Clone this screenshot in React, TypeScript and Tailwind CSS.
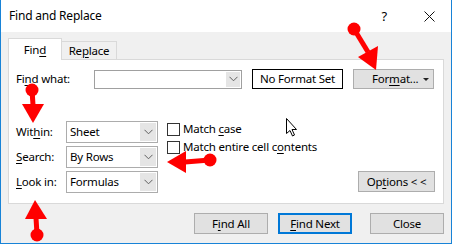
import React from "react";

const font = { fontFamily: '"Segoe UI", "Noto Sans", sans-serif' };

function Chevron() {
  return (
    <svg width="9" height="6" viewBox="0 0 9 6">
      <path d="M0.5 0.8 L4.5 4.8 L8.5 0.8" fill="none" stroke="#606060" strokeWidth="1" />
    </svg>
  );
}

function Select({ value }: { value: string }) {
  return (
    <div className="flex h-[22px] w-[92px] items-stretch border border-[#acacac] bg-white">
      <div className="flex flex-1 items-center pl-[3px] text-black">{value}</div>
      <div className="m-px flex w-[16px] items-center justify-center bg-[#e5e5e5]">
        <Chevron />
      </div>
    </div>
  );
}

function Btn({
  children,
  w = "w-[74px]",
  primary = false,
}: {
  children: React.ReactNode;
  w?: string;
  primary?: boolean;
}) {
  return (
    <div
      className={`${w} flex h-[21px] items-center justify-center bg-[#e1e1e1] text-black ${
        primary ? "border-2 border-[#0078d7]" : "border border-[#adadad]"
      }`}
    >
      {children}
    </div>
  );
}

function Check({ children }: { children: React.ReactNode }) {
  return (
    <div className="flex h-[18px] items-center">
      <div className="h-[13px] w-[13px] border border-[#333] bg-white" />
      <span className="ml-[3px]">{children}</span>
    </div>
  );
}

export default function App() {
  return (
    <div
      className="relative h-[244px] w-[452px] overflow-hidden border-x border-b border-[#1883d7] bg-[#f0f0f0] text-[11.5px] leading-none tracking-[-0.2px] text-black"
      style={font}
    >
      {/* title bar */}
      <div className="flex h-[32px] items-center bg-white pl-[8px] pr-[16px]">
        <span className="flex-1 text-[12px]">Find and Replace</span>
        <span className="mr-[37px] text-[13px]">?</span>
        <svg width="11" height="11" viewBox="0 0 11 11">
          <path d="M0.5 0.5 L10.5 10.5 M10.5 0.5 L0.5 10.5" stroke="#111" strokeWidth="1" />
        </svg>
      </div>

      <div className="px-[7px] pt-[6px]">
        {/* tabs */}
        <div className="relative z-10 -mb-px flex items-end">
          <div className="flex h-[22px] w-[54px] items-center justify-center border border-b-0 border-[#d9d9d9] bg-white">
            Fin<u className="underline-offset-2">d</u>
          </div>
          <div className="flex h-[19px] w-[55px] items-center justify-center border border-l-0 border-[#d9d9d9] bg-[#f0f0f0]">
            Re<u className="underline-offset-2">p</u>lace
          </div>
        </div>

        {/* panel */}
        <div className="h-[145px] border border-[#d9d9d9] bg-white pl-[7px] pr-[8px]">
          <div className="mt-[9px] flex items-center">
            <span className="w-[78px]">
              Fi<u className="underline-offset-2">n</u>d what:
            </span>
            <div className="flex h-[19px] w-[148px] items-stretch border border-[#a0a0a0] bg-white">
              <div className="flex-1" />
              <div className="m-px flex w-[14px] items-center justify-center bg-[#e5e5e5]">
                <Chevron />
              </div>
            </div>
            <div className="ml-[10px] flex h-[20px] w-[91px] items-center justify-center border border-black">
              No Format Set
            </div>
            <div className="ml-[10px] flex h-[20px] w-[81px] items-center border border-[#adadad] bg-[#e1e1e1]">
              <span className="pl-[18px]">
                For<u className="underline-offset-2">m</u>at...
              </span>
              <div className="flex-1" />
              <svg className="mr-[4px]" width="6" height="3" viewBox="0 0 6 3">
                <path d="M0 0 H6 L3 3 Z" fill="#222" />
              </svg>
            </div>
          </div>

          <div className="mt-[32px] flex items-start">
            <div className="flex flex-col gap-[3px]">
              <div className="flex items-center">
                <span className="w-[50px]">
                  Wit<u className="underline-offset-2">h</u>in:
                </span>
                <Select value="Sheet" />
              </div>
              <div className="flex items-center">
                <span className="w-[50px]">
                  <u className="underline-offset-2">S</u>earch:
                </span>
                <Select value="By Rows" />
              </div>
              <div className="flex items-center">
                <span className="w-[50px]">
                  <u className="underline-offset-2">L</u>ook in:
                </span>
                <Select value="Formulas" />
              </div>
            </div>
            <div className="ml-[9px] mt-[-1px] flex flex-col">
              <Check>
                Match <u className="underline-offset-2">c</u>ase
              </Check>
              <Check>
                Match entire cell c<u className="underline-offset-2">o</u>ntents
              </Check>
            </div>
            <div className="flex-1" />
            <div className="mt-[50px]">
              <div className="flex h-[21px] w-[77px] items-center justify-center border border-[#adadad] bg-[#e1e1e1]">
                Op<u className="underline-offset-2">t</u>ions &lt; &lt;
              </div>
            </div>
          </div>
        </div>

        {/* bottom buttons */}
        <div className="mt-[9px] flex justify-end">
          <Btn>
            F<u className="underline-offset-2">i</u>nd All
          </Btn>
          <div className="ml-[10px]">
            <Btn primary>
              <u className="underline-offset-2">F</u>ind Next
            </Btn>
          </div>
          <div className="ml-[18px]">
            <Btn>Close</Btn>
          </div>
        </div>
      </div>

      {/* annotations */}
      <svg className="pointer-events-none absolute left-[-1px] top-0" width="452" height="244" viewBox="0 0 452 244">
        <g fill="#ff0000" stroke="#ff0000">
          <line x1="354" y1="29" x2="368" y2="52" strokeWidth="5" />
          <circle cx="354" cy="29" r="6.5" stroke="none" />
          <polygon points="358,57 378,46 376,70" stroke="none" />

          <line x1="32" y1="90" x2="33" y2="105" strokeWidth="5" />
          <circle cx="32" cy="90" r="6.5" stroke="none" />
          <polygon points="22,104 44,104 33,123" stroke="none" />

          <line x1="210" y1="160" x2="185" y2="162" strokeWidth="5" />
          <circle cx="210" cy="160" r="6.5" stroke="none" />
          <polygon points="167,162 186,151 186,173" stroke="none" />

          <line x1="36" y1="218" x2="37" y2="234" strokeWidth="5" />
          <circle cx="37" cy="235" r="6.5" stroke="none" />
          <polygon points="35,200 25,219 47,219" stroke="none" />
        </g>
        <path
          d="M286.5 118.5 L286.5 133.5 L290 130.5 L292.5 136 L294.5 135 L292 129.5 L296.5 129.5 Z"
          fill="#fff"
          stroke="#000"
          strokeWidth="1"
          strokeLinejoin="round"
        />
      </svg>
    </div>
  );
}
